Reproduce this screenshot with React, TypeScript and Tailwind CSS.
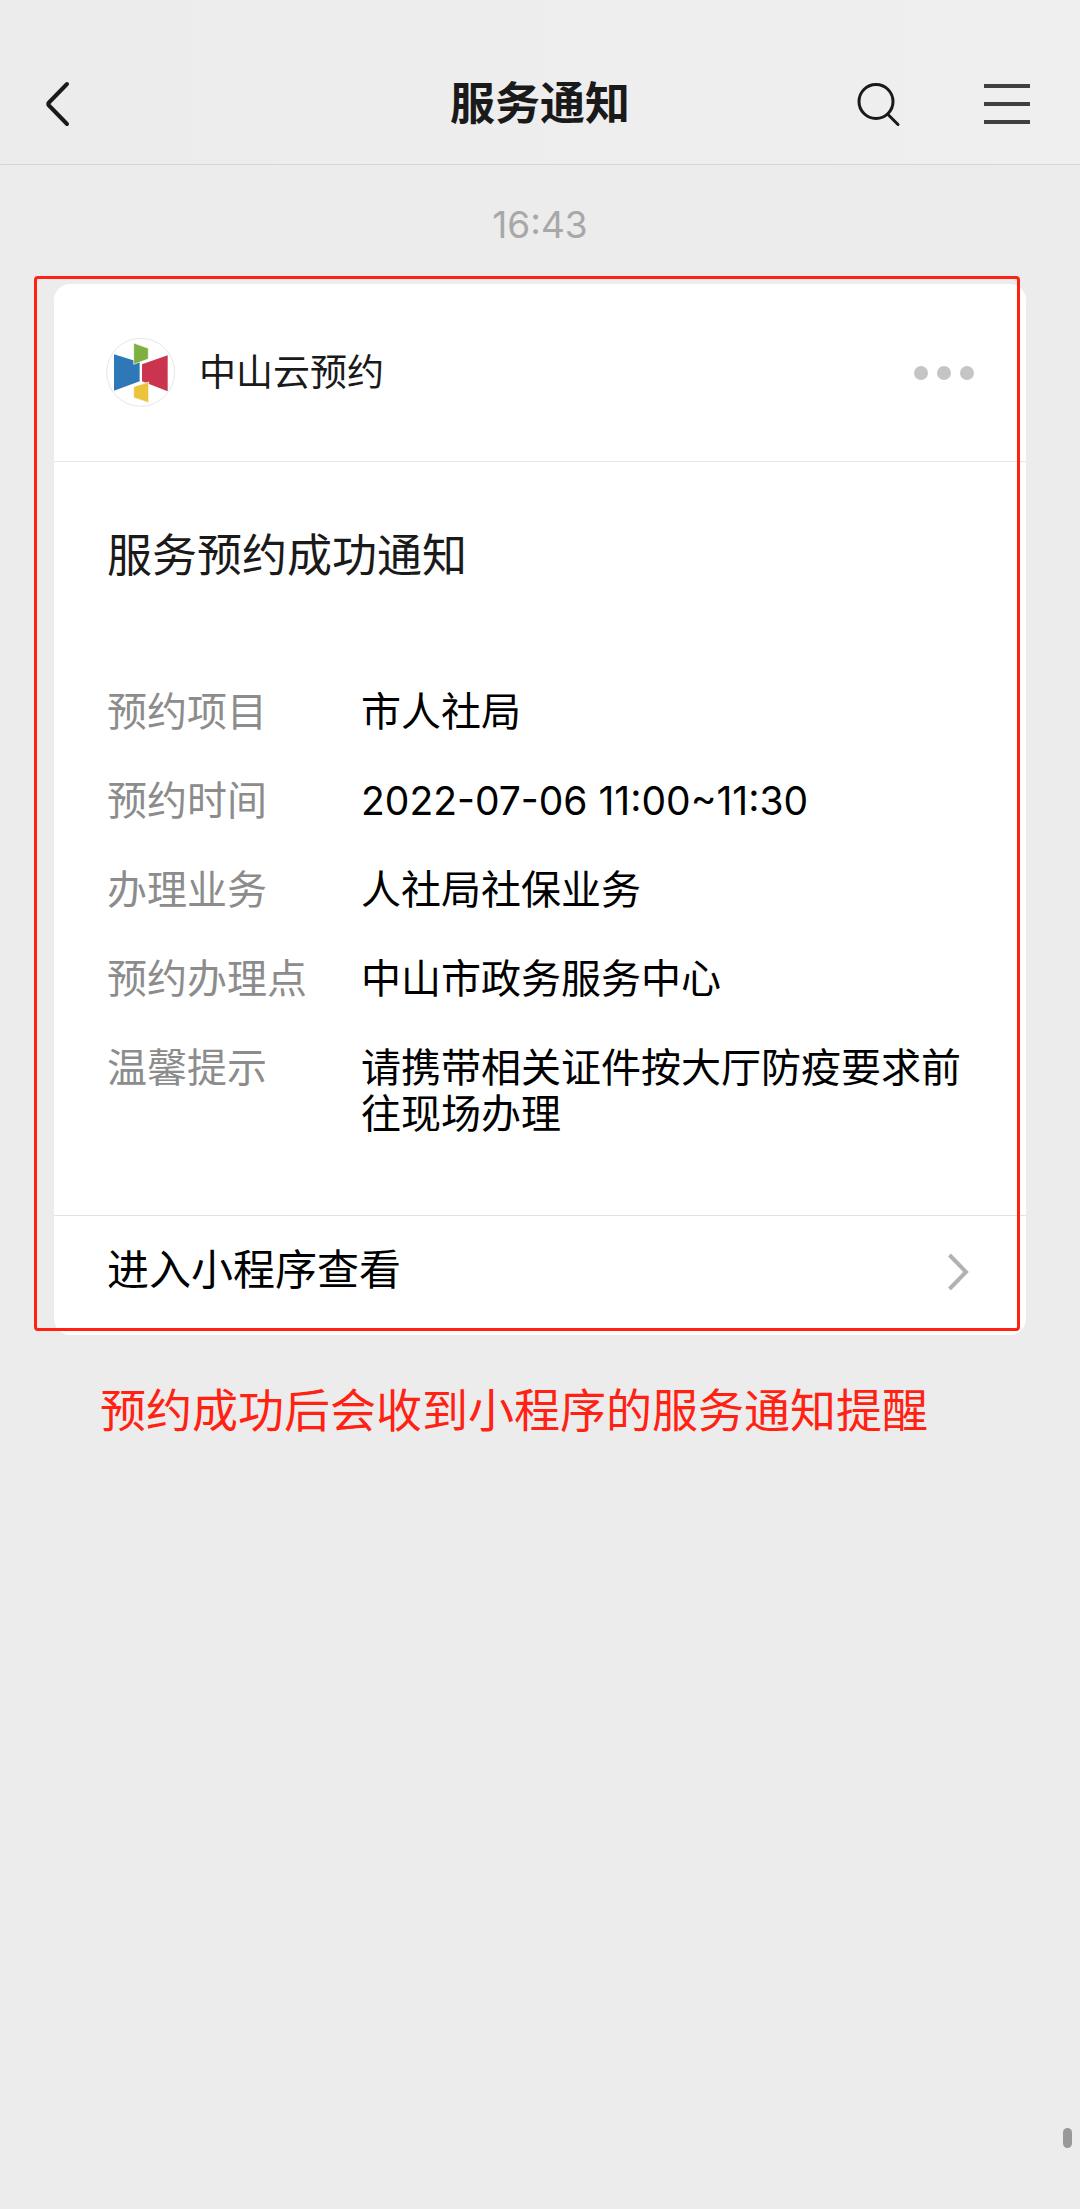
const details = [
  { label: '预约项目', value: '市人社局' },
  { label: '预约时间', value: '2022-07-06 11:00~11:30', numeric: true },
  { label: '办理业务', value: '人社局社保业务' },
  { label: '预约办理点', value: '中山市政务服务中心' },
  { label: '温馨提示', value: '请携带相关证件按大厅防疫要求前往现场办理' },
]

function Logo() {
  return (
    <svg className="size-[69px] shrink-0" viewBox="259 233 207 207" aria-hidden="true">
      <circle cx="363" cy="336" r="102" fill="#fff" stroke="#e6e6ea" strokeWidth="3" />
      <path d="M283 282L360 306V363L283 391Z" fill="#2f78b8" />
      <path d="M367 312L444 285V393L367 363Z" fill="#cb344f" />
      <path d="M342 248L386 264V296L342 312Z" fill="#7fb03f" stroke="#fff" strokeWidth="2" />
      <path d="M342 379L387 365V427L342 412Z" fill="#ecc43c" stroke="#fff" strokeWidth="2" />
    </svg>
  )
}

export default function App() {
  return (
    <div className="relative min-h-screen bg-[#ececec] font-['Inter','Noto_Sans_CJK_SC',sans-serif] text-[#1a1a1a]">
      {/* 顶部导航 */}
      <header className="border-b border-[#d5d5d5] bg-linear-to-r from-[#ececec] to-[#efefef] pt-11">
        <div className="grid h-[120px] grid-cols-[1fr_auto_1fr] items-center">
          <button type="button" aria-label="返回" className="ml-11 justify-self-start">
            <svg className="h-12 w-7" viewBox="0 0 28 48" fill="none" stroke="currentColor" strokeWidth="4" strokeLinecap="round" strokeLinejoin="round">
              <path d="M23 4L4.500 23Q4 24 4.500 25L23 44" />
            </svg>
          </button>
          <h1 className="text-[45px] leading-[60px] font-bold">服务通知</h1>
          <div className="mr-[50px] flex items-center gap-20 justify-self-end">
            <button type="button" aria-label="搜索">
              <svg className="h-12 w-12" viewBox="0 0 48 48" fill="none" stroke="currentColor" strokeWidth="3" strokeLinecap="round">
                <circle cx="22" cy="21.500" r="17" />
                <path d="M34 34.500L44 44.500" />
              </svg>
            </button>
            <button type="button" aria-label="菜单">
              <svg className="h-12 w-12" viewBox="0 0 48 48" fill="none" stroke="#404040" strokeWidth="4">
                <path d="M2 6H48M2 24H48M2 42H48" />
              </svg>
            </button>
          </div>
        </div>
      </header>

      <main>
        <p className="pt-9 pb-[35px] text-center text-[37px] leading-[48px] text-[#a8a8a8]">16:43</p>

        {/* 通知卡片 */}
        <div className="relative mx-[54px]">
          <article className="rounded-2xl bg-white">
            <div className="flex items-center border-b border-[#e6e6e6] py-[54px] pr-13 pl-13">
              <Logo />
              <h2 className="ml-6 flex-1 text-[37px] leading-[60px]">中山云预约</h2>
              <button type="button" aria-label="更多" className="flex gap-[9px]">
                <span className="size-3.5 rounded-full bg-[#c5c5c7]" />
                <span className="size-3.5 rounded-full bg-[#c5c5c7]" />
                <span className="size-3.5 rounded-full bg-[#c5c5c7]" />
              </button>
            </div>

            <div className="pt-16 pr-12 pb-[78px] pl-[53px]">
              <h3 className="text-[45px] leading-[60px]">服务预约成功通知</h3>
              <dl className="mt-[103px] flex flex-col gap-[43px] text-[40px] leading-[46px]">
                {details.map((item) => (
                  <div key={item.label} className="flex">
                    <dt className="w-[254px] shrink-0 text-[#8c8c8c]">{item.label}</dt>
                    <dd className={item.numeric ? 'flex-1 text-[39px] text-black' : 'flex-1 text-black'}>{item.value}</dd>
                  </div>
                ))}
              </dl>
            </div>

            <a href="#" className="flex items-center justify-between border-t border-[#e2e2e2] pt-6 pr-[55px] pb-[35px] pl-[53px] text-[42px] leading-[60px] text-black">
              进入小程序查看
              <svg className="h-10 w-6" viewBox="0 0 24 40" fill="none" stroke="#b2b2b2" strokeWidth="4">
                <path d="M2.500 5L19 22L2.500 39" />
              </svg>
            </a>
          </article>

          {/* 红色标注框 */}
          <div className="pointer-events-none absolute -top-2 right-1.5 bottom-1 -left-5 rounded-sm border-3 border-[#ff2213]" />
        </div>

        <p className="mt-[45px] ml-[100px] text-[46px] leading-[60px] text-[#ff2213]">预约成功后会收到小程序的服务通知提醒</p>
      </main>

      {/* 滚动条 */}
      <div className="absolute right-2 bottom-[61px] h-5 w-[9px] rounded-full bg-[#999]" />
    </div>
  )
}
